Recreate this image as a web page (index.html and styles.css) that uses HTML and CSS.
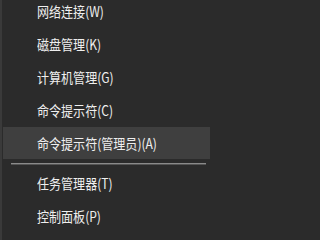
FILE: index.html
```html
<!DOCTYPE html>
<html lang="zh-CN">
<head>
<meta charset="utf-8">
<link rel="stylesheet" href="styles.css">
</head>
<body>
<div class="menu">
  <div class="item"><span class="label">网络连接(W)</span></div>
  <div class="item"><span class="label">磁盘管理(K)</span></div>
  <div class="item"><span class="label">计算机管理(G)</span></div>
  <div class="item"><span class="label">命令提示符(C)</span></div>
  <div class="item active"><span class="label">命令提示符(管理员)(A)</span></div>
  <div class="sep"><div class="sep-line"></div></div>
  <div class="item"><span class="label">任务管理器(T)</span></div>
  <div class="item"><span class="label">控制面板(P)</span></div>
</div>
</body>
</html>
```
FILE: styles.css
```css
html, body {
  margin: 0;
  padding: 0;
  background: #2b2b2b;
  height: 240px;
  overflow: hidden;
}
.menu {
  box-sizing: border-box;
  width: 210px;
  height: 245px;
  margin-top: -5px;
  border-left: 2px solid #3a3a3a;
  display: flex;
  flex-direction: column;
  gap: 1px;
  font-family: "Noto Sans CJK SC", "Noto Sans", sans-serif;
  color: #efefef;
  overflow: hidden;
}
.item {
  flex: none;
  height: 32px;
  display: flex;
  align-items: center;
  padding-left: 34px;
  margin-left: 1px;
}
.item.active {
  background: #3f3f3f;
}
.label {
  display: inline-block;
  font-size: 14px;
  line-height: 16px;
  white-space: nowrap;
  transform: scaleX(0.86);
  transform-origin: left center;
}
.sep {
  flex: none;
  height: 6px;
  display: flex;
  align-items: center;
  padding: 0 4px 0 9px;
}
.sep-line {
  flex: 1;
  height: 1px;
  background: #8a8a8a;
  box-shadow: 0 1px 0 #555;
}
```
